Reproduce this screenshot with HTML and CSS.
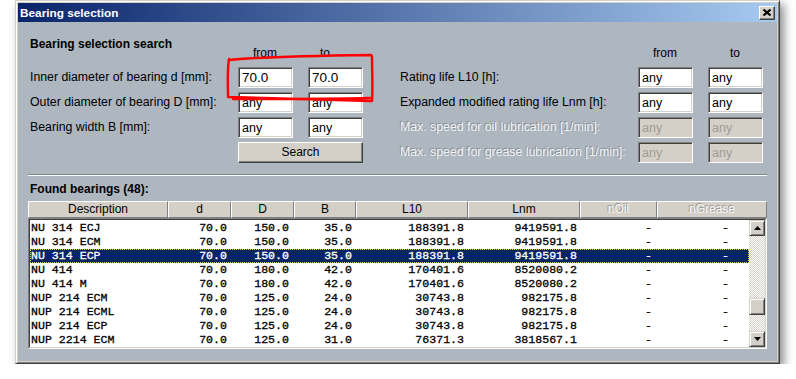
FILE: index.html
```html
<!DOCTYPE html>
<html lang="en">
<head>
    <meta charset="UTF-8">
    <title>Bearing selection</title>
    <link rel="stylesheet" href="styles.css">
</head>
<body>
    <div class="window">
        <div class="titlebar">
            <span class="title">Bearing selection</span>
            <div class="close-btn">
                <svg width="8" height="7" viewBox="0 0 8 7"><path d="M0.5 0.5 L7.5 6.5 M7.5 0.5 L0.5 6.5" stroke="#000" stroke-width="2" fill="none"/></svg>
            </div>
        </div>

        <div class="client">
            <div class="search">
                <div class="heading">Bearing selection search</div>
                <div class="col-head from-l">from</div>
                <div class="col-head to-l">to</div>
                <div></div>
                <div class="col-head from-r">from</div>
                <div class="col-head to-r">to</div>

                <div class="label">Inner diameter of bearing d [mm]:</div>
                <div class="field">70.0</div>
                <div class="field">70.0</div>
                <div class="label right">Rating life L10 [h]:</div>
                <div class="field small">any</div>
                <div class="field small">any</div>

                <div class="label">Outer diameter of bearing D [mm]:</div>
                <div class="field small">any</div>
                <div class="field small">any</div>
                <div class="label right">Expanded modified rating life Lnm [h]:</div>
                <div class="field small">any</div>
                <div class="field small">any</div>

                <div class="label">Bearing width B [mm]:</div>
                <div class="field small">any</div>
                <div class="field small">any</div>
                <div class="label right disabled">Max. speed for oil lubrication [1/min]:</div>
                <div class="field small off">any</div>
                <div class="field small off">any</div>

                <div></div>
                <div class="search-btn">Search</div>
                <div class="label right disabled">Max. speed for grease lubrication [1/min]:</div>
                <div class="field small off">any</div>
                <div class="field small off">any</div>
            </div>

            <div class="divider"></div>

            <div class="found">Found bearings (48):</div>

            <div class="table-head">
                <div class="th">Description</div>
                <div class="th">d</div>
                <div class="th">D</div>
                <div class="th">B</div>
                <div class="th">L10</div>
                <div class="th">Lnm</div>
                <div class="th disabled">nOil</div>
                <div class="th disabled">nGrease</div>
            </div>
            <div class="table-body">
                <div class="table-inner">
                    <div class="rows">
                        <div class="row"><span>NU 314 ECJ</span><span>70.0</span><span>150.0</span><span>35.0</span><span>188391.8</span><span>9419591.8</span><span>-</span><span>-</span></div>
                        <div class="row"><span>NU 314 ECM</span><span>70.0</span><span>150.0</span><span>35.0</span><span>188391.8</span><span>9419591.8</span><span>-</span><span>-</span></div>
                        <div class="row selected"><span>NU 314 ECP</span><span>70.0</span><span>150.0</span><span>35.0</span><span>188391.8</span><span>9419591.8</span><span>-</span><span>-</span></div>
                        <div class="row"><span>NU 414</span><span>70.0</span><span>180.0</span><span>42.0</span><span>170401.6</span><span>8520080.2</span><span>-</span><span>-</span></div>
                        <div class="row"><span>NU 414 M</span><span>70.0</span><span>180.0</span><span>42.0</span><span>170401.6</span><span>8520080.2</span><span>-</span><span>-</span></div>
                        <div class="row"><span>NUP 214 ECM</span><span>70.0</span><span>125.0</span><span>24.0</span><span>30743.8</span><span>982175.8</span><span>-</span><span>-</span></div>
                        <div class="row"><span>NUP 214 ECML</span><span>70.0</span><span>125.0</span><span>24.0</span><span>30743.8</span><span>982175.8</span><span>-</span><span>-</span></div>
                        <div class="row"><span>NUP 214 ECP</span><span>70.0</span><span>125.0</span><span>24.0</span><span>30743.8</span><span>982175.8</span><span>-</span><span>-</span></div>
                        <div class="row"><span>NUP 2214 ECM</span><span>70.0</span><span>125.0</span><span>31.0</span><span>76371.3</span><span>3818567.1</span><span>-</span><span>-</span></div>
                    </div>
                    <div class="scrollbar">
                        <div class="scroll-btn">
                            <svg width="7" height="4" viewBox="0 0 7 4"><polygon points="0,4 7,4 3.5,0" fill="#000"/></svg>
                        </div>
                        <div class="track-top"></div>
                        <div class="thumb"></div>
                        <div class="track-bottom"></div>
                        <div class="scroll-btn">
                            <svg width="7" height="4" viewBox="0 0 7 4"><polygon points="0,0 7,0 3.5,4" fill="#000"/></svg>
                        </div>
                    </div>
                </div>
            </div>
        </div>
    </div>

    <!-- red marker drawn over the screenshot -->
    <svg class="marker" width="796" height="379" viewBox="0 0 796 379">
        <path d="M229 60 C255 57 300 56 371 55 M372 56 C372 72 373 88 372 101 M371 101 C320 100 270 98 229 97 M228 97 C228 84 227 72 229 59 M233 99 C290 99 330 99 370 98" stroke="#f00" stroke-width="2.4" fill="none" stroke-linecap="round"/>
    </svg>
</body>
</html>
```

FILE: styles.css
```css
body {
    margin: 0;
    background: #fff;
    font-family: "Liberation Sans", Arial, sans-serif;
    font-size: 12px;
    color: #000;
}
.window {
    margin-left: 15px;
    width: 765px;
    height: 364px;
    box-sizing: border-box;
    border: 1px solid;
    border-color: #d4d0c8 #404040 #404040 #d4d0c8;
    padding: 2px;
    background: #d4d0c8;
    box-shadow: inset 1px 1px #fff, inset -1px -1px #808080, 4px 4px 9px rgba(0,0,0,0.45);
    display: flex;
    flex-direction: column;
}
.titlebar {
    height: 19px;
    display: flex;
    align-items: center;
    justify-content: space-between;
    padding-left: 2px;
    background: linear-gradient(to right, #0a246a, #a6caf0);
}
.title {
    color: #fff;
    font-weight: bold;
    font-size: 11.8px;
}
.close-btn {
    width: 16px;
    height: 14px;
    margin-right: 2px;
    box-sizing: border-box;
    background: #d4d0c8;
    border: 1px solid;
    border-color: #fff #404040 #404040 #fff;
    box-shadow: inset -1px -1px #808080;
    display: flex;
    align-items: center;
    justify-content: center;
}
.client {
    flex: 1;
    background: #aeb6c0;
    padding: 14px 10px 0 10px;
}
.search {
    display: grid;
    grid-template-columns: 195px 55px 55px 245px 55px 55px;
    grid-template-rows: 27px repeat(4, 21px);
    column-gap: 15px;
    row-gap: 4px;
}
.heading {
    font-weight: bold;
    line-height: 16px;
    padding-left: 2px;
}
.col-head {
    align-self: end;
    line-height: 14px;
    margin-bottom: 3px;
}
.from-l, .from-r { padding-left: 15px; }
.to-l { padding-left: 12px; }
.to-r { padding-left: 22px; }
.label {
    font-size: 12.3px;
    line-height: 21px;
    padding-left: 2px;
    white-space: nowrap;
}
.label.right { padding-left: 22px; }
.label.disabled {
    color: #f2f3f4;
    text-shadow: -1px -1px 0 #878e97;
}
.field {
    box-sizing: border-box;
    height: 21px;
    background: #fff;
    border: 1px solid;
    border-color: #808080 #fff #fff #808080;
    box-shadow: inset 1px 1px #404040, inset -1px -1px #d4d0c8;
    padding-left: 3px;
    font-size: 13.5px;
    line-height: 20px;
}
.field.small { font-size: 12.5px; }
.field.off {
    background: #d4d0c8;
    color: #a09c96;
}
.search-btn {
    grid-column: 2 / span 2;
    box-sizing: border-box;
    height: 21px;
    background: #d4d0c8;
    border: 1px solid;
    border-color: #fff #404040 #404040 #fff;
    box-shadow: inset -1px -1px #808080;
    text-align: center;
    line-height: 19px;
}
.divider {
    margin-top: 11px;
    border-top: 1px solid #7f8790;
    border-bottom: 1px solid #fff;
}
.found {
    margin-top: 5px;
    font-weight: bold;
    line-height: 16px;
    padding-left: 2px;
}
.table-head {
    margin-top: 4px;
    display: grid;
    grid-template-columns: 140px 63px 63px 62px 112px 112px 77px 110px;
    height: 17px;
}
.th {
    box-sizing: border-box;
    background: #d4d0c8;
    border: 1px solid;
    border-color: #fff #808080 #808080 #fff;
    text-align: center;
    line-height: 15px;
}
.th.disabled {
    color: #f6f6f6;
    text-shadow: -1px -1px 0 #9a9893;
}
.table-body {
    border: 1px solid;
    border-color: #808080 #fff #fff #808080;
}
.table-inner {
    height: 127px;
    display: flex;
    background: #fff;
    border: 1px solid;
    border-color: #404040 #d4d0c8 #d4d0c8 #404040;
}
.rows {
    width: 719px;
    padding-top: 1px;
    font-family: "Liberation Mono", "Courier New", monospace;
    font-size: 11.6px;
    -webkit-text-stroke: 0.3px #000;
}
.row {
    display: grid;
    grid-template-columns: 138px 63px 63px 62px 112px 112px 77px 92px;
    height: 14px;
    line-height: 14px;
    box-sizing: border-box;
}
.row span {
    text-align: right;
    white-space: pre;
}
.row span:nth-child(1) { text-align: left; padding-left: 1px; }
.row span:nth-child(2) { padding-right: 4px; }
.row span:nth-child(3) { padding-right: 5px; }
.row span:nth-child(4) { padding-right: 4px; }
.row span:nth-child(5) { padding-right: 4px; }
.row span:nth-child(6) { padding-right: 3px; }
.row span:nth-child(7) { padding-right: 5px; }
.row span:nth-child(8) { padding-right: 20px; }
.row.selected {
    background: #0a246a;
    color: #fff;
    -webkit-text-stroke: 0.3px #fff;
    outline: 1px dotted #e8cf6a;
    outline-offset: -1px;
}
.scrollbar {
    width: 16px;
    display: flex;
    flex-direction: column;
    background: repeating-conic-gradient(#fff 0 25%, #d4d0c8 0 50%) 0 0 / 2px 2px;
}
.scroll-btn, .thumb {
    box-sizing: border-box;
    background: #d4d0c8;
    border: 1px solid;
    border-color: #d4d0c8 #404040 #404040 #d4d0c8;
    box-shadow: inset 1px 1px #fff, inset -1px -1px #808080;
}
.scroll-btn {
    height: 16px;
    display: flex;
    align-items: center;
    justify-content: center;
}
.track-top { height: 62px; }
.thumb { height: 17px; }
.track-bottom { flex: 1; }
.marker {
    position: absolute;
    left: 0;
    top: 0;
    pointer-events: none;
}
```
